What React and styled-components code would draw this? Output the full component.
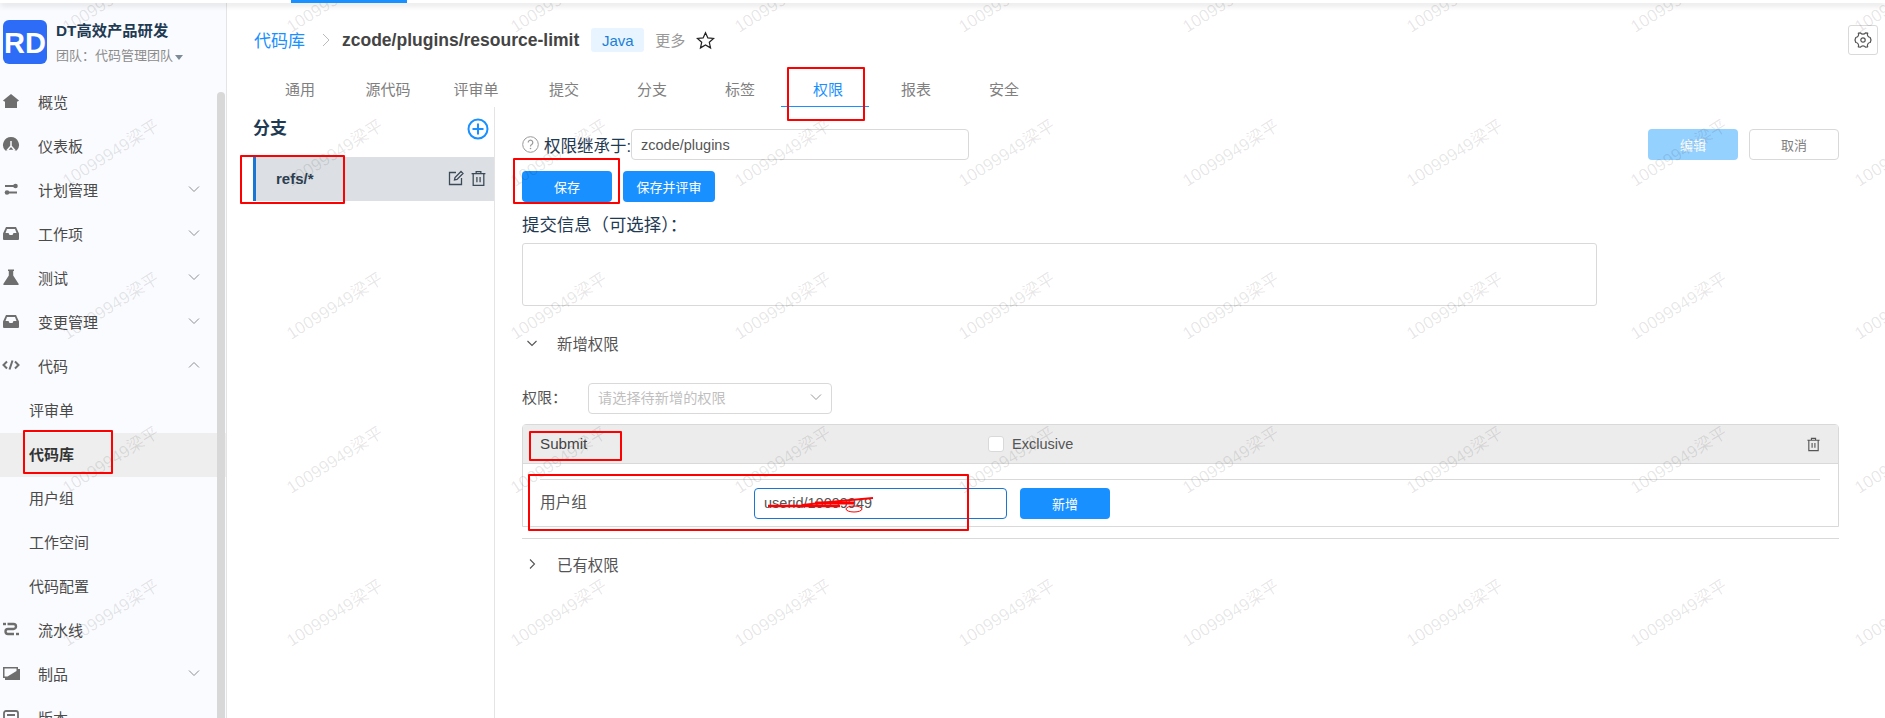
import React from 'react';
import styled, { createGlobalStyle } from 'styled-components';

const GlobalStyle = createGlobalStyle`
    html, body {
        margin: 0;
        padding: 0;
        height: 718px;
        overflow: hidden;
        background: #fff;
    }
    * {
        box-sizing: border-box;
    }
    body, input, textarea, button {
        font-family: 'Liberation Sans', 'Noto Sans CJK SC', sans-serif;
    }
`;

const Page = styled.div`
    position: relative;
    width: 1885px;
    height: 718px;
    overflow: hidden;
    color: #4a4a4a;
`;
const TopBar = styled.div`
    position: relative;
    z-index: 1;
    height: 3px;
    background: #fff;
    box-shadow: 0 2px 6px rgba(0, 0, 0, 0.18);
`;
const TopBarMark = styled.div`
    width: 116px;
    height: 3px;
    margin-left: 291px;
    background: #1890ff;
`;
const Body = styled.div`
    display: flex;
    height: 715px;
`;

const Sidebar = styled.aside`
    position: relative;
    flex: none;
    width: 227px;
    background: #fafbfe;
    border-right: 1px solid #e4e4e4;
    overflow: hidden;
`;
const ScrollThumb = styled.div`
    position: absolute;
    top: 89px;
    right: 1px;
    bottom: 0;
    width: 8px;
    background: #d8d8d8;
    border-radius: 4px 4px 0 0;
`;
const Brand = styled.div`
    display: flex;
    gap: 9px;
    height: 78px;
    padding: 17px 0 0 3px;
`;
const Logo = styled.div`
    flex: none;
    width: 44px;
    height: 44px;
    border-radius: 6px;
    background: #2d6cf6;
    color: #fff;
    font-size: 29px;
    font-weight: 700;
    line-height: 46px;
    text-align: center;
    overflow: hidden;
`;
const BrandText = styled.div`
    display: flex;
    flex-direction: column;
    gap: 6px;
    padding-top: 1px;
`;
const BrandName = styled.div`
    color: #1f3a53;
    font-size: 15.3px;
    font-weight: 700;
    line-height: 20px;
    white-space: nowrap;
`;
const BrandTeam = styled.div`
    display: flex;
    align-items: center;
    gap: 2px;
    color: #8c8c8c;
    font-size: 13px;
    line-height: 18px;
    white-space: nowrap;
    &::after {
        content: '';
        margin-top: 2px;
        border: 4px solid transparent;
        border-top: 5px solid #7d8b99;
        border-bottom: 0;
    }
`;
const NavItem = styled.div`
    display: flex;
    align-items: center;
    height: 44px;
    padding: 0 0 4px ${p => (p.$sub ? '29px' : '2px')};
    font-size: 15px;
    font-weight: ${p => (p.$active ? 700 : 400)};
    color: ${p => (p.$active ? '#333' : '#4a4a4a')};
    background: ${p => (p.$active ? '#eeeeee' : 'transparent')};
    white-space: nowrap;
    svg.icon {
        flex: none;
        width: 18px;
        height: 18px;
        margin-right: 18px;
        color: #6e6e6e;
    }
`;
const NavLabel = styled.span`
    flex: 1;
`;
const NavChevron = styled.svg`
    flex: none;
    width: 12px;
    height: 8px;
    margin-right: 26px;
`;

const Main = styled.main`
    flex: 1;
    min-width: 0;
    display: flex;
    flex-direction: column;
`;
const Header = styled.div`
    display: flex;
    align-items: center;
    flex: none;
    height: 74px;
    padding: 0 7px 0 27px;
`;
const Crumb = styled.span`
    margin-bottom: 2px;
    color: #1890ff;
    font-size: 17px;
`;
const CrumbSeparator = styled.svg`
    width: 8px;
    height: 14px;
    margin: 0 12px 0 17px;
`;
const RepoTitle = styled.span`
    color: #444;
    font-size: 17.5px;
    font-weight: 700;
    white-space: nowrap;
`;
const LangTag = styled.span`
    width: 53px;
    height: 24px;
    margin-left: 12px;
    border-radius: 3px;
    background: #e8f4ff;
    color: #1b7fd6;
    font-size: 15px;
    line-height: 25px;
    text-align: center;
`;
const MoreLink = styled.span`
    margin: 0 0 2px 11px;
    color: #999;
    font-size: 15px;
`;
const StarIcon = styled.svg`
    width: 19px;
    height: 19px;
    margin-left: 11px;
`;
const SettingsButton = styled.div`
    display: flex;
    align-items: center;
    justify-content: center;
    width: 30px;
    height: 30px;
    margin-left: auto;
    border: 1px solid #d9d9d9;
    border-radius: 3px;
`;
const Tabs = styled.div`
    display: flex;
    flex: none;
    height: 30px;
    padding-left: 29px;
`;
const Tab = styled.div`
    position: relative;
    width: 88px;
    height: 30px;
    padding-bottom: 4px;
    color: ${p => (p.$active ? '#1890ff' : '#808080')};
    font-size: 15px;
    line-height: 26px;
    text-align: center;
    ${p =>
        p.$active &&
        `&::after {
            content: '';
            position: absolute;
            left: -3px;
            right: 3px;
            bottom: 0;
            height: 1px;
            background: #1890ff;
        }`}
`;
const Content = styled.div`
    flex: 1;
    display: flex;
    min-height: 0;
`;
const BranchPanel = styled.section`
    flex: none;
    width: 268px;
    padding-left: 26px;
    border-right: 1px solid #e4e4e4;
`;
const BranchHead = styled.div`
    display: flex;
    align-items: center;
    justify-content: space-between;
    height: 50px;
    padding: 0 5px 12px 0;
    color: #1f3a53;
    font-size: 17px;
    font-weight: 700;
    svg {
        margin-top: 5px;
    }
`;
const BranchRow = styled.div`
    display: flex;
    align-items: center;
    height: 44px;
    padding: 0 7px 0 20px;
    border-left: 3px solid #1976d2;
    background: #dce0e4;
    color: #2c3e50;
    font-size: 15px;
    font-weight: 700;
`;
const BranchName = styled.span`
    flex: 1;
    margin-bottom: 2px;
`;
const BranchActions = styled.div`
    display: flex;
    align-items: center;
    gap: 6px;
    margin-bottom: 2px;
`;

const PermissionPanel = styled.section`
    flex: 1;
    min-width: 0;
    padding: 22px 46px 0 27px;
`;
const InheritRow = styled.div`
    display: flex;
    align-items: center;
    height: 31px;
`;
const HelpIcon = styled.svg`
    flex: none;
    width: 17px;
    height: 17px;
    margin-right: 5px;
`;
const InheritLabel = styled.span`
    width: 87px;
    color: #1f3a53;
    font-size: 16.5px;
    white-space: nowrap;
`;
const TextField = styled.input`
    display: block;
    width: ${p => p.$width};
    height: ${p => p.$height || '30px'};
    padding: 0 9px ${p => (p.$focused ? '2px' : '0')};
    border: 1px solid ${p => (p.$focused ? '#1976d2' : '#d9d9d9')};
    border-radius: 4px;
    outline: none;
    background: transparent;
    color: #555;
    font-size: 14.5px;
`;
const Button = styled.button`
    flex: none;
    width: ${p => p.$width || '90px'};
    height: 31px;
    padding: 0;
    border: 1px solid ${p => (p.$plain ? '#d9d9d9' : 'transparent')};
    border-radius: 4px;
    background: ${p => (p.$plain ? '#fff' : p.$faded ? '#95d1ff' : '#1890ff')};
    color: ${p => (p.$plain ? '#808080' : '#fff')};
    font-size: 13px;
`;
const EditActions = styled.div`
    display: flex;
    gap: 11px;
    margin-left: auto;
`;
const SaveRow = styled.div`
    display: flex;
    gap: 11px;
    margin-top: 11px;
`;
const CommitLabel = styled.div`
    height: 41px;
    padding-top: 12px;
    color: #1f3a53;
    font-size: 17.4px;
    line-height: 22px;
    white-space: nowrap;
`;
const CommitBox = styled.textarea`
    display: block;
    width: 1075px;
    height: 63px;
    border: 1px solid #d9d9d9;
    border-radius: 3px;
    background: transparent;
    outline: none;
    resize: none;
`;
const CollapseHead = styled.div`
    display: flex;
    align-items: center;
    height: ${p => p.$height};
    padding-bottom: 3px;
    color: #555;
    font-size: 15.4px;
`;
const CollapseIcon = styled.svg`
    flex: none;
    width: 12px;
    height: 12px;
    margin: 0 19px 0 4px;
`;
const PermissionPick = styled.div`
    display: flex;
    align-items: center;
    height: 30px;
    margin-bottom: 11px;
`;
const PickLabel = styled.span`
    width: 66px;
    margin-bottom: 3px;
    font-size: 15px;
    color: #555;
`;
const Select = styled.div`
    display: flex;
    align-items: center;
    justify-content: space-between;
    width: 244px;
    height: 31px;
    padding: 0 9px 2px;
    border: 1px solid #d9d9d9;
    border-radius: 4px;
    color: #bfbfbf;
    font-size: 14.2px;
`;
const Card = styled.div`
    width: 1317px;
    height: 103px;
    border: 1px solid #d9d9d9;
    border-radius: 4px 4px 0 0;
`;
const CardHead = styled.div`
    display: flex;
    align-items: center;
    height: 39px;
    padding: 0 17px 0 17px;
    border-bottom: 1px solid #d9d9d9;
    background: #ececec;
    color: #444;
    font-size: 15.2px;
`;
const SubmitName = styled.span`
    width: 448px;
    margin-bottom: 1px;
`;
const Checkbox = styled.span`
    width: 16px;
    height: 16px;
    margin-right: 8px;
    border: 1px solid #d9d9d9;
    border-radius: 3px;
    background: #fff;
`;
const ExclusiveLabel = styled.span`
    flex: 1;
    font-size: 14.5px;
    color: #555;
`;
const CardBody = styled.div`
    margin: 15px 18px 0 17px;
    padding-top: 8px;
    border-top: 1px solid #d9d9d9;
`;
const GroupRow = styled.div`
    display: flex;
    align-items: center;
    gap: 13px;
`;
const GroupLabel = styled.span`
    width: 201px;
    margin-bottom: 5px;
    font-size: 15.6px;
    color: #555;
`;
const Divider = styled.div`
    width: 1317px;
    margin-top: 11px;
    border-top: 1px solid #d9d9d9;
`;

const WatermarkLayer = styled.div`
    position: absolute;
    top: -79px;
    left: -2px;
    display: grid;
    grid-template-columns: repeat(9, 224px);
    grid-auto-rows: 153.5px;
    pointer-events: none;
`;
const Watermark = styled.span`
    display: flex;
    align-items: center;
    justify-content: center;
    color: rgba(0, 0, 0, 0.1);
    font-size: 17px;
    white-space: nowrap;
    transform: rotate(-32deg);
`;
const RedBox = styled.div`
    position: absolute;
    left: ${p => p.$x}px;
    top: ${p => p.$y}px;
    width: ${p => p.$w}px;
    height: ${p => p.$h}px;
    border: 2px solid #f00;
    border-radius: 1px;
    pointer-events: none;
`;
const Scribble = styled.svg`
    position: absolute;
    left: 760px;
    top: 490px;
    width: 120px;
    height: 26px;
    pointer-events: none;
`;

const NavGlyph = ({ kind }) => {
    const glyphs = {
        home: <path fill='currentColor' d='M9 2 1 8.400 2.200 9.400H3V16H15V9.400H15.800L17 8.400Z' />,
        dashboard: (
            <>
                <path fill='currentColor' d='M9 1a8 8 0 0 0-5.700 13.600h11.400A8 8 0 0 0 9 1Z' />
                <path fill='none' stroke='#fafbfe' strokeWidth='1.500' d='M9 5v5M9 10l-4 4.500M9 10l4 4.500M6 14.500h6' />
            </>
        ),
        plan: (
            <>
                <circle cx='13.500' cy='6' r='2.300' fill='currentColor' />
                <circle cx='5' cy='12.500' r='2.300' fill='currentColor' />
                <path stroke='currentColor' strokeWidth='1.800' d='M3 6h9M6 12.500h9' />
            </>
        ),
        inbox: (
            <path
                fill='currentColor'
                fillRule='evenodd'
                d='M4 3h10l3 6.500V15a1 1 0 0 1-1 1H2a1 1 0 0 1-1-1V9.500ZM5 5 3.500 9H6.500l1 2h3l1-2H14.500L13 5Z'
            />
        ),
        flask: <path fill='currentColor' d='M6 1.500h6V3h-.8v4.500L16.700 16a.8.8 0 0 1-.7 1H2a.8.8 0 0 1-.7-1L6.800 7.500V3H6Z' />,
        code: <path fill='none' stroke='currentColor' strokeWidth='2' d='M5 5.500 1.500 9 5 12.500M13 5.500 16.500 9 13 12.500M10.500 4.500 7.500 13.500' />,
        pipeline: (
            <>
                <path fill='none' stroke='currentColor' strokeWidth='2.400' d='M5.500 4h6a2.500 2.500 0 0 1 0 5H6a2.500 2.500 0 0 0 0 5h6' />
                <rect x='1' y='2.800' width='3' height='2.400' fill='currentColor' />
                <rect x='14' y='12.800' width='3' height='2.400' fill='currentColor' />
            </>
        ),
        artifact: (
            <path
                fill='currentColor'
                fillRule='evenodd'
                d='M1 3h15v2h2v11H3v-2H1ZM2.500 4.500V12.500H5.500L14.500 7V4.500Z'
            />
        ),
        version: <path fill='none' stroke='currentColor' strokeWidth='1.800' d='M4 3h10a2 2 0 0 1 2 2v8a2 2 0 0 1-2 2H4a2 2 0 0 1-2-2V5a2 2 0 0 1 2-2ZM5 7h8' />,
    };
    return (
        <svg className='icon' viewBox='0 0 18 18'>
            {glyphs[kind]}
        </svg>
    );
};

const Chevron = ({ up }) => (
    <NavChevron viewBox='0 0 12 8'>
        <path fill='none' stroke='#8f8f8f' d={up ? 'M1 6.500 6 1.500l5 5' : 'M1 1.500l5 5 5-5'} />
    </NavChevron>
);

const TrashIcon = ({ size, color }) => (
    <svg width={size} height={size} viewBox='0 0 16 16' fill='none' stroke={color} strokeWidth='1.200'>
        <path d='M1.500 3.500h13M5.800 3.500V1.500h4.400v2M3 3.500V14.500H13V3.500M6.500 6.500V11.500M9.500 6.500V11.500' />
    </svg>
);

const navItems = [
    { label: '概览', icon: 'home' },
    { label: '仪表板', icon: 'dashboard' },
    { label: '计划管理', icon: 'plan', chevron: 'down' },
    { label: '工作项', icon: 'inbox', chevron: 'down' },
    { label: '测试', icon: 'flask', chevron: 'down' },
    { label: '变更管理', icon: 'inbox', chevron: 'down' },
    { label: '代码', icon: 'code', chevron: 'up' },
    { label: '评审单', sub: true },
    { label: '代码库', sub: true, active: true },
    { label: '用户组', sub: true },
    { label: '工作空间', sub: true },
    { label: '代码配置', sub: true },
    { label: '流水线', icon: 'pipeline' },
    { label: '制品', icon: 'artifact', chevron: 'down' },
    { label: '版本', icon: 'version' },
];

const tabs = ['通用', '源代码', '评审单', '提交', '分支', '标签', '权限', '报表', '安全'];

const annotations = [
    { x: 787, y: 67, w: 78, h: 54 },
    { x: 240, y: 155, w: 105, h: 49 },
    { x: 513, y: 158, w: 107, h: 46 },
    { x: 23, y: 430, w: 90, h: 44 },
    { x: 529, y: 431, w: 93, h: 30 },
    { x: 528, y: 474, w: 441, h: 57 },
];

const App = () => {
    return (
        <Page>
            <GlobalStyle />
            <TopBar>
                <TopBarMark />
            </TopBar>
            <Body>
                <Sidebar>
                    <Brand>
                        <Logo>RD</Logo>
                        <BrandText>
                            <BrandName>DT高效产品研发</BrandName>
                            <BrandTeam>团队：代码管理团队</BrandTeam>
                        </BrandText>
                    </Brand>
                    {navItems.map(item => (
                        <NavItem key={item.label} $sub={item.sub} $active={item.active}>
                            {item.icon && <NavGlyph kind={item.icon} />}
                            <NavLabel>{item.label}</NavLabel>
                            {item.chevron && <Chevron up={item.chevron === 'up'} />}
                        </NavItem>
                    ))}
                    <ScrollThumb />
                </Sidebar>
                <Main>
                    <Header>
                        <Crumb>代码库</Crumb>
                        <CrumbSeparator viewBox='0 0 8 14'>
                            <path fill='none' stroke='#bbb' d='M1 1l6 6-6 6' />
                        </CrumbSeparator>
                        <RepoTitle>zcode/plugins/resource-limit</RepoTitle>
                        <LangTag>Java</LangTag>
                        <MoreLink>更多</MoreLink>
                        <StarIcon viewBox='0 0 20 20'>
                            <path
                                fill='none'
                                stroke='#222'
                                strokeWidth='1.300'
                                d='M10 1.800l2.500 5.500 6 .6-4.500 4 1.300 5.900L10 14.800l-5.300 3 1.300-5.900-4.500-4 6-.6Z'
                            />
                        </StarIcon>
                        <SettingsButton>
                            <svg width='18' height='18' viewBox='0 0 18 18' fill='none' stroke='#555' strokeWidth='1.200' strokeLinejoin='round'>
                                <path d='M6.500 1.800a3 3 0 0 0 5 0l2.200.4a3 3 0 0 0 2.500 4.300l.8 2.500-.8 2.500a3 3 0 0 0-2.500 4.300l-2.200.4a3 3 0 0 0-5 0l-2.200-.4a3 3 0 0 0-2.500-4.300L1 9l.8-2.500a3 3 0 0 0 2.500-4.300Z' />
                                <circle cx='9' cy='9' r='2.200' />
                            </svg>
                        </SettingsButton>
                    </Header>
                    <Tabs>
                        {tabs.map(tab => (
                            <Tab key={tab} $active={tab === '权限'}>
                                {tab}
                            </Tab>
                        ))}
                    </Tabs>
                    <Content>
                        <BranchPanel>
                            <BranchHead>
                                分支
                                <svg width='22' height='22' viewBox='0 0 22 22' fill='none' stroke='#1890ff' strokeWidth='2'>
                                    <circle cx='11' cy='11' r='9.500' />
                                    <path d='M11 5.500v11M5.500 11h11' />
                                </svg>
                            </BranchHead>
                            <BranchRow>
                                <BranchName>refs/*</BranchName>
                                <BranchActions>
                                    <svg width='16' height='16' viewBox='0 0 16 16' fill='none' stroke='#3c4a57' strokeWidth='1.300'>
                                        <path d='M8 2.500H1.500V14.500H13.500V8M6.500 10l.5-2.500L13 1.500 15 3.500 9 9.500Z' />
                                    </svg>
                                    <TrashIcon size={17} color='#3c4a57' />
                                </BranchActions>
                            </BranchRow>
                        </BranchPanel>
                        <PermissionPanel>
                            <InheritRow>
                                <HelpIcon viewBox='0 0 17 17'>
                                    <circle cx='8.500' cy='8.500' r='7.800' fill='none' stroke='#999' />
                                    <path fill='none' stroke='#999' strokeWidth='1.200' d='M6.200 6.500a2.300 2.300 0 1 1 3.500 2c-.9.500-1.200 1-1.200 2' />
                                    <circle cx='8.500' cy='12.500' r='.8' fill='#999' />
                                </HelpIcon>
                                <InheritLabel>权限继承于:</InheritLabel>
                                <TextField readOnly value='zcode/plugins' $width='338px' $height='31px' />
                                <EditActions>
                                    <Button $faded>编辑</Button>
                                    <Button $plain>取消</Button>
                                </EditActions>
                            </InheritRow>
                            <SaveRow>
                                <Button>保存</Button>
                                <Button $width='92px'>保存并评审</Button>
                            </SaveRow>
                            <CommitLabel>提交信息（可选择）：</CommitLabel>
                            <CommitBox readOnly />
                            <CollapseHead $height='77px'>
                                <CollapseIcon viewBox='0 0 12 12'>
                                    <path fill='none' stroke='#555' strokeWidth='1.100' d='M1.500 4l4.500 4.500L10.500 4' />
                                </CollapseIcon>
                                新增权限
                            </CollapseHead>
                            <PermissionPick>
                                <PickLabel>权限：</PickLabel>
                                <Select>
                                    请选择待新增的权限
                                    <svg width='12' height='8' viewBox='0 0 12 8'>
                                        <path fill='none' stroke='#999' d='M1 1.500l5 5 5-5' />
                                    </svg>
                                </Select>
                            </PermissionPick>
                            <Card>
                                <CardHead>
                                    <SubmitName>Submit</SubmitName>
                                    <Checkbox />
                                    <ExclusiveLabel>Exclusive</ExclusiveLabel>
                                    <TrashIcon size={15} color='#555' />
                                </CardHead>
                                <CardBody>
                                    <GroupRow>
                                        <GroupLabel>用户组</GroupLabel>
                                        <TextField readOnly value='userid/10099949' $width='253px' $height='31px' $focused />
                                        <Button>新增</Button>
                                    </GroupRow>
                                </CardBody>
                            </Card>
                            <Divider />
                            <CollapseHead $height='52px'>
                                <CollapseIcon viewBox='0 0 12 12'>
                                    <path fill='none' stroke='#555' strokeWidth='1.100' d='M4 1.500 8.500 6 4 10.500' />
                                </CollapseIcon>
                                已有权限
                            </CollapseHead>
                        </PermissionPanel>
                    </Content>
                </Main>
            </Body>
            <WatermarkLayer>
                {Array.from({ length: 54 }, (_, i) => (
                    <Watermark key={i}>10099949梁平</Watermark>
                ))}
            </WatermarkLayer>
            {annotations.map(box => (
                <RedBox key={`${box.x}-${box.y}`} $x={box.x} $y={box.y} $w={box.w} $h={box.h} />
            ))}
            <Scribble viewBox='0 0 120 26'>
                <path fill='none' stroke='#f00' strokeWidth='2.500' d='M8 16H80' />
                <path fill='none' stroke='#f00' strokeWidth='2' d='M42 15 80 11 113 8' />
                <path fill='none' stroke='#f00' strokeWidth='3' d='M55 13H94' />
                <ellipse cx='94' cy='19' rx='8' ry='3' fill='none' stroke='#f00' />
            </Scribble>
        </Page>
    );
};

export default App;
